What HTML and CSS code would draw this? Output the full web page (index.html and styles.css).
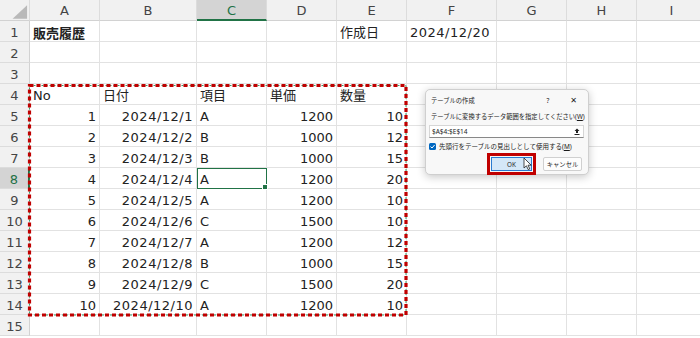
FILE: index.html
```html
<!DOCTYPE html>
<html lang="ja">
<head>
<meta charset="utf-8">
<title>販売履歴</title>
<link rel="stylesheet" href="styles.css">
</head>
<body>
<div class="sheet">
  <div class="grid">
    <div class="ch corner"><svg width="30" height="21" viewBox="0 0 30 21"><polygon points="28,5 28,19 13,19" fill="#b9b9b9"/></svg></div>
    <div class="ch">A</div><div class="ch">B</div><div class="ch hl-col">C</div><div class="ch">D</div><div class="ch">E</div><div class="ch">F</div><div class="ch">G</div><div class="ch">H</div><div class="ch">I</div>

    <div class="rh">1</div><div class="c b">販売履歴</div><div class="c"></div><div class="c"></div><div class="c"></div><div class="c">作成日</div><div class="c d">2024/12/20</div><div class="c"></div><div class="c"></div><div class="c"></div>
    <div class="rh">2</div><div class="c"></div><div class="c"></div><div class="c"></div><div class="c"></div><div class="c"></div><div class="c"></div><div class="c"></div><div class="c"></div><div class="c"></div>
    <div class="rh">3</div><div class="c"></div><div class="c"></div><div class="c"></div><div class="c"></div><div class="c"></div><div class="c"></div><div class="c"></div><div class="c"></div><div class="c"></div>
    <div class="rh">4</div><div class="c">No</div><div class="c">日付</div><div class="c">項目</div><div class="c">単価</div><div class="c">数量</div><div class="c"></div><div class="c"></div><div class="c"></div><div class="c"></div>
    <div class="rh">5</div><div class="c n">1</div><div class="c n d">2024/12/1</div><div class="c">A</div><div class="c n">1200</div><div class="c n">10</div><div class="c"></div><div class="c"></div><div class="c"></div><div class="c"></div>
    <div class="rh">6</div><div class="c n">2</div><div class="c n d">2024/12/2</div><div class="c">B</div><div class="c n">1000</div><div class="c n">12</div><div class="c"></div><div class="c"></div><div class="c"></div><div class="c"></div>
    <div class="rh">7</div><div class="c n">3</div><div class="c n d">2024/12/3</div><div class="c">B</div><div class="c n">1000</div><div class="c n">15</div><div class="c"></div><div class="c"></div><div class="c"></div><div class="c"></div>
    <div class="rh hl-row">8</div><div class="c n">4</div><div class="c n d">2024/12/4</div><div class="c sel">A</div><div class="c n">1200</div><div class="c n">20</div><div class="c"></div><div class="c"></div><div class="c"></div><div class="c"></div>
    <div class="rh">9</div><div class="c n">5</div><div class="c n d">2024/12/5</div><div class="c">A</div><div class="c n">1200</div><div class="c n">10</div><div class="c"></div><div class="c"></div><div class="c"></div><div class="c"></div>
    <div class="rh">10</div><div class="c n">6</div><div class="c n d">2024/12/6</div><div class="c">C</div><div class="c n">1500</div><div class="c n">10</div><div class="c"></div><div class="c"></div><div class="c"></div><div class="c"></div>
    <div class="rh">11</div><div class="c n">7</div><div class="c n d">2024/12/7</div><div class="c">A</div><div class="c n">1200</div><div class="c n">12</div><div class="c"></div><div class="c"></div><div class="c"></div><div class="c"></div>
    <div class="rh">12</div><div class="c n">8</div><div class="c n d">2024/12/8</div><div class="c">B</div><div class="c n">1000</div><div class="c n">15</div><div class="c"></div><div class="c"></div><div class="c"></div><div class="c"></div>
    <div class="rh">13</div><div class="c n">9</div><div class="c n d">2024/12/9</div><div class="c">C</div><div class="c n">1500</div><div class="c n">20</div><div class="c"></div><div class="c"></div><div class="c"></div><div class="c"></div>
    <div class="rh">14</div><div class="c n">10</div><div class="c n d">2024/12/10</div><div class="c">A</div><div class="c n">1200</div><div class="c n">10</div><div class="c"></div><div class="c"></div><div class="c"></div><div class="c"></div>
    <div class="rh">15</div><div class="c"></div><div class="c"></div><div class="c"></div><div class="c"></div><div class="c"></div><div class="c"></div><div class="c"></div><div class="c"></div><div class="c"></div>
  </div>

  <svg class="marquee" width="700" height="338" viewBox="0 0 700 338">
    <rect x="29.5" y="85.5" width="376.5" height="229.5" fill="none" stroke="#3f9a6a" stroke-width="1" stroke-dasharray="2 2"/>
    <rect x="29.5" y="85.5" width="376.5" height="229.5" fill="none" stroke="#c00000" stroke-width="3.2" stroke-dasharray="4 3"/>
  </svg>

  <div class="dialog">
    <div class="titlebar">
      <span class="title">テーブルの作成</span>
      <span class="tb-btns"><span class="q">?</span><span class="x">✕</span></span>
    </div>
    <div class="label">テーブルに変換するデータ範囲を指定してください(<u>W</u>)</div>
    <div class="input">
      <span>$A$4:$E$14</span>
      <svg width="6" height="7" viewBox="0 0 6 7"><path d="M3 0.5 L5.5 3 H4 V5 H2 V3 H0.5 Z" fill="#222"/><rect x="0.5" y="6" width="5" height="1" fill="#222"/></svg>
    </div>
    <div class="check">
      <span class="box"><svg width="7" height="7" viewBox="0 0 7 7"><path d="M1.5 3.6 L3 5 L5.6 2" fill="none" stroke="#fff" stroke-width="1"/></svg></span>
      <span>先頭行をテーブルの見出しとして使用する(<u>M</u>)</span>
    </div>
    <div class="buttons">
      <span class="btn ok">OK</span>
      <span class="btn">キャンセル</span>
    </div>
  </div>

  <svg class="cursor" width="10" height="14" viewBox="0 0 10 14"><path d="M1 1 V11 L3.4 8.8 L5.2 12.6 L6.8 11.9 L5 8.2 H8.2 Z" fill="#fff" stroke="#222" stroke-width="0.8" stroke-linejoin="round"/></svg>
</div>
</body>
</html>
```

FILE: styles.css
```css
* { box-sizing: border-box; }
html, body { margin: 0; padding: 0; background: #fff; }
body { width: 700px; height: 338px; overflow: hidden; }

.sheet {
  position: relative;
  width: 700px;
  height: 338px;
  overflow: hidden;
  font-family: "DejaVu Sans", "Noto Sans CJK JP", sans-serif;
  font-size: 13px;
  color: #222;
}

.grid {
  display: grid;
  grid-template-columns: 30px 70px 97px 70px 70px 70px 90px 70px 70px 70px;
  grid-auto-rows: 21px;
  width: 707px;
}

.c {
  border-right: 1px solid #e2e2e2;
  border-bottom: 1px solid #e2e2e2;
  padding: 4px 3px 0 3px;
  line-height: 16px;
  white-space: nowrap;
  overflow: hidden;
  font-family: "DejaVu Sans", "Noto Sans CJK JP", sans-serif;
}
.c.n { text-align: right; }
.c.d { letter-spacing: 0.5px; }
.c.b { font-weight: bold; font-family: "Noto Sans CJK JP", sans-serif; }

.ch {
  background: #f1f1f1;
  border-right: 1px solid #dcdcdc;
  border-bottom: 1px solid #d2d2d2;
  color: #444;
  text-align: center;
  padding-top: 3px;
  line-height: 16px;
}
.ch.corner { padding: 0; display: flex; }
.ch.hl-col {
  background: #d4d4d4;
  color: #1e7145;
  border-bottom: 2px solid #217346;
}

.rh {
  background: #f1f1f1;
  border-right: 1px solid #d2d2d2;
  border-bottom: 1px solid #dcdcdc;
  color: #444;
  text-align: center;
  padding-top: 4px;
  line-height: 16px;
}
.rh.hl-row {
  background: #d4d4d4;
  color: #1e7145;
  border-right: 2px solid #217346;
}

.c.sel {
  position: relative;
  overflow: visible;
  outline: 1px solid #217346;
  outline-offset: -1px;
}
.c.sel::after {
  content: "";
  position: absolute;
  right: -2px;
  bottom: -2px;
  width: 4px;
  height: 4px;
  background: #217346;
  border: 1px solid #fff;
}

.marquee {
  position: absolute;
  left: 0;
  top: 0;
}

.dialog {
  position: absolute;
  left: 425px;
  top: 89px;
  width: 164px;
  height: 86px;
  background: #f8f8f8;
  border: 1px solid #cfcfcf;
  border-radius: 5px;
  box-shadow: 0 2px 8px rgba(0, 0, 0, 0.22);
  padding: 0 4px 0 3px;
  display: flex;
  flex-direction: column;
  font-family: "Noto Sans", "Noto Sans CJK JP", sans-serif;
  font-size: 6.3px;
  color: #1a1a1a;
}
.titlebar {
  height: 20px;
  display: flex;
  align-items: center;
  justify-content: space-between;
  padding-left: 2px;
}
.tb-btns { display: flex; gap: 21px; align-items: center; padding-right: 7px; }
.tb-btns .q { font-size: 6.5px; }
.tb-btns .x { font-size: 8px; font-family: "DejaVu Sans", sans-serif; }
.label {
  margin-top: 3px;
  height: 8px;
  line-height: 8px;
  padding-left: 2px;
  white-space: nowrap;
}
.input {
  margin-top: 4px;
  height: 13px;
  background: #fff;
  border: 1px solid #d6d6d6;
  border-bottom-color: #888;
  display: flex;
  align-items: center;
  justify-content: space-between;
  padding: 0 3px 0 2px;
  font-size: 6.5px;
}
.check {
  margin-top: 4px;
  height: 8px;
  display: flex;
  align-items: center;
  gap: 3px;
  white-space: nowrap;
  font-size: 6.5px;
}
.check .box {
  width: 7px;
  height: 7px;
  background: #0067c0;
  border-radius: 1.5px;
  display: flex;
}
.buttons {
  margin-top: 7px;
  height: 14px;
  display: flex;
  justify-content: flex-end;
  gap: 11px;
  padding-right: 2px;
}
.btn {
  width: 39px;
  height: 14px;
  display: flex;
  align-items: center;
  justify-content: center;
  background: #fdfdfd;
  border: 1px solid #d0d0d0;
  border-radius: 2px;
  font-size: 6.3px;
}
.btn.ok {
  width: 41px;
  border-radius: 0;
  background: #d4e7f8;
  border-color: #2a7bd0;
  outline: 3px solid #c00000;
  outline-offset: 1px;
}

.cursor {
  position: absolute;
  left: 523px;
  top: 157px;
}
```
